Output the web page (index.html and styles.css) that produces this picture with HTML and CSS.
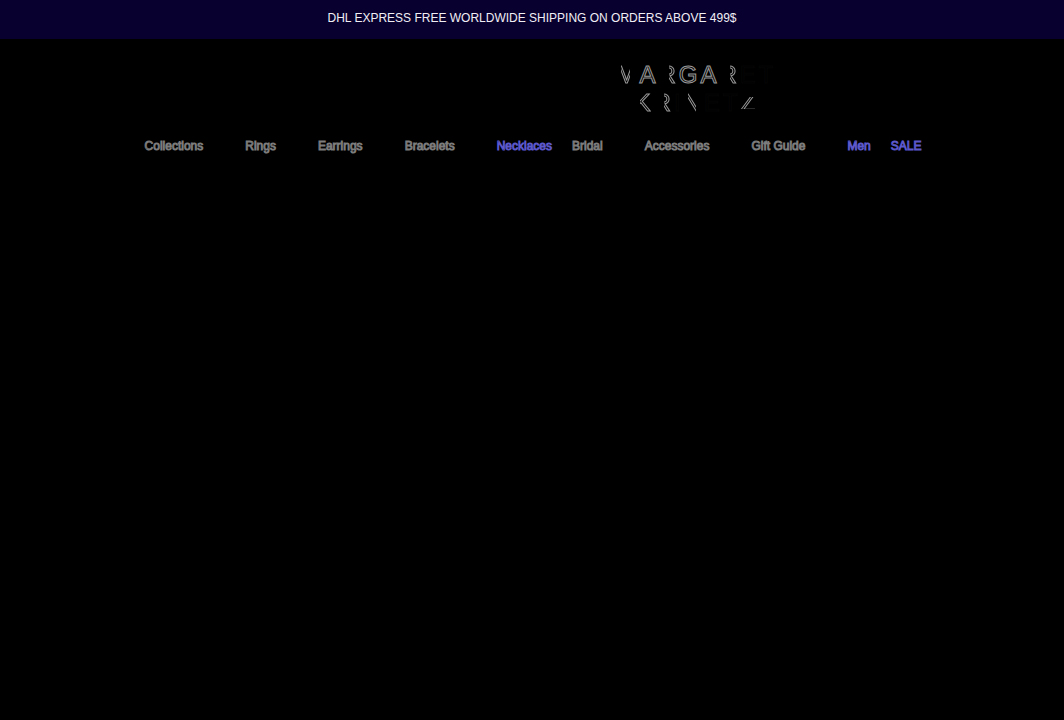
FILE: index.html
```html
<!DOCTYPE html>
<html lang="en">
<head>
  <meta charset="UTF-8">
  <meta name="viewport" content="width=device-width, initial-scale=1">
  <title>Margaret Krinetz</title>
  <link rel="stylesheet" href="styles.css">
</head>
<body>
  <div class="announcement">DHL EXPRESS FREE WORLDWIDE SHIPPING ON ORDERS ABOVE 499$</div>

  <header class="header">
    <a class="logo" href="#">
      <span class="logo-line"><span class="inner">M</span><span>A</span><span class="right">R</span><span>G</span><span>A</span><span class="right">R</span><span class="dim">E</span><span class="dim">T</span></span>
      <span class="logo-line"><span class="right-wide">K</span><span class="right">R</span><span class="dim">I</span><span class="inner">N</span><span class="dim">E</span><span class="dim">T</span><span class="diagonal">Z</span></span>
    </a>
  </header>

  <nav class="nav">
    <a class="has-menu" href="#">Collections</a>
    <a class="has-menu" href="#">Rings</a>
    <a class="has-menu" href="#">Earrings</a>
    <a class="has-menu" href="#">Bracelets</a>
    <a class="accent" href="#">Necklaces</a>
    <a class="has-menu" href="#">Bridal</a>
    <a class="has-menu" href="#">Accessories</a>
    <a class="has-menu" href="#">Gift Guide</a>
    <a class="accent" href="#">Men</a>
    <a class="accent" href="#">SALE</a>
  </nav>
</body>
</html>
```

FILE: styles.css
```css
body {
  margin: 0;
  min-height: 100vh;
  background: #000;
  color: #a0a0a0;
  font-family: "Liberation Sans", Arial, sans-serif;
  font-size: 12px;
}

a {
  color: inherit;
  text-decoration: none;
}

.announcement {
  padding: 9px 20px 12px;
  background: #08002e;
  color: #f0eef5;
  line-height: 18px;
  text-align: center;
}

.header {
  display: grid;
  grid-template-columns: 31fr 69fr;
  padding: 22px 0 20px;
}

.logo {
  grid-column: 2;
  display: flex;
  flex-direction: column;
  align-items: center;
  padding-right: 4px;
  font-size: 24px;
  line-height: 28px;
  color: #000;
  -webkit-text-stroke: 1px #999;
}

.logo-line {
  display: flex;
  gap: 3px;
}

/* only the slanted and curved parts of the letters are lit */
.inner {
  mask-image: linear-gradient(90deg, transparent 26%, #000 26%, #000 72%, transparent 72%);
}

.right {
  mask-image: linear-gradient(90deg, transparent 60%, #000 60%);
}

.right-wide {
  mask-image: linear-gradient(90deg, transparent 30%, #000 30%);
}

.diagonal {
  mask-image: linear-gradient(transparent 28%, #000 28%, #000 72%, transparent 72%);
}

.dim {
  -webkit-text-stroke-color: #050505;
}

.nav {
  display: flex;
  justify-content: center;
  gap: 20px;
  padding-left: 2px;
  line-height: 18px;
  color: #000;
  -webkit-text-stroke: 1px #7c7c7c;
}

.has-menu {
  padding-right: 22px;
}

.accent {
  -webkit-text-stroke-color: #5c58cc;
}
```
